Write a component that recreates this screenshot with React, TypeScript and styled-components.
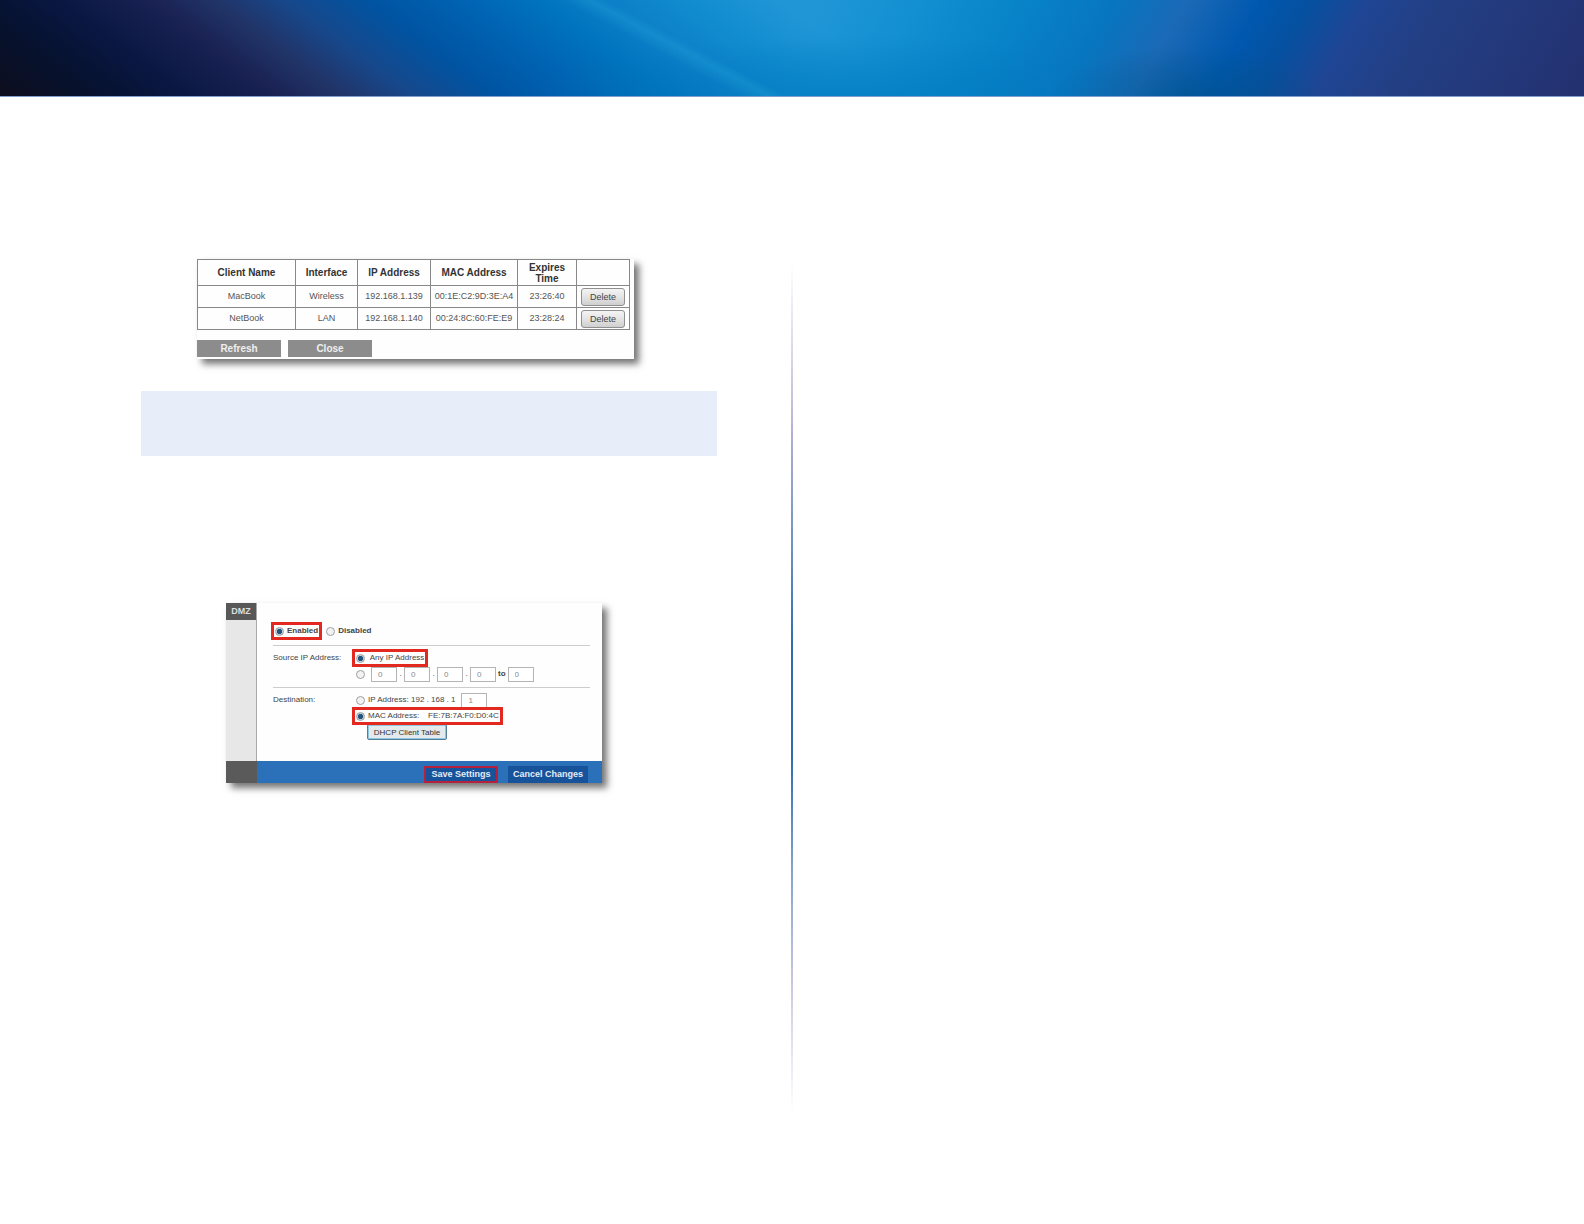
import React from "react";
import styled, { createGlobalStyle, css } from "styled-components";

const GlobalStyle = createGlobalStyle`
  *, *::before, *::after { box-sizing: border-box; }
  body {
    margin: 0;
    background: #fff;
    color: #444;
    font-family: "Liberation Sans", Arial, Helvetica, sans-serif;
  }
  button, input { font-family: inherit; }
`;

const Banner = styled.header`
  height: 97px;
  border-bottom: 1px solid #7f9dcb;
  background:
    linear-gradient(28deg, transparent 42%, rgba(40, 170, 220, 0.28) 43.6%, transparent 44.6%),
    radial-gradient(ellipse 330px 60px at 54% 100%, rgba(0, 120, 190, 0.6), transparent),
    radial-gradient(ellipse 140px 50px at 75% 100%, rgba(0, 80, 130, 0.5), transparent),
    linear-gradient(120deg,
      rgba(24, 146, 213, 0) 50%, #1290d2 56%, #0884c9 62%, #0776c0 68%,
      #1b69b6 72.5%, #0058ae 77%, #0650a0 80%, #1f4594 83.5%,
      #233f84 88%, #23387a 94%, #24306f 100%),
    linear-gradient(37deg,
      #0e0e1e 0%, #06122f 6%, #0a1743 11%, #1a2354 16.5%, #213468 20%,
      #17478a 24%, #0054a2 29%, #0062b2 34%, #0074be 39%, #0c80c8 43%,
      #128dd0 48%, #2196d6 53%, #2196d6 100%);
`;

const Page = styled.main`
  display: grid;
  grid-template-columns: 1fr 2px 1fr;
  min-height: 1120px;
`;

const Column = styled.section`
  display: flex;
  flex-direction: column;
  align-items: flex-start;
  padding: 162px 74px 0 141px;
`;

const Divider = styled.div`
  margin: 166px 0 16px;
  height: 850px;
  background: linear-gradient(#fff, #c9c6de 15%, #a9a9d0 22%, #6d93c2 33%, #2f6cae 45%,
    #2f6cae 58%, #86a5cc 72%, #c6c4df 84%, #fff);
`;

const Figure = styled.figure<{ $indent: number; $width: number }>`
  margin: 0 0 0 ${(p) => p.$indent}px;
  width: ${(p) => p.$width}px;
  background: #fefefe;
  box-shadow: 5px 5px 7px rgba(0, 0, 0, 0.55);
`;

const Note = styled.aside`
  align-self: stretch;
  height: 65px;
  margin: 32px 0 147px;
  background: #e8edfa;
`;

const ClientTable = styled.table`
  border-collapse: collapse;
  table-layout: fixed;
  width: 432px;
  font-size: 9px;
  line-height: 11px;
  color: #555;
  text-align: center;
`;

const Cell = css`
  border: 1px solid #888;
  padding: 0;
`;

const HeadCell = styled.th<{ $width: number }>`
  ${Cell}
  width: ${(p) => p.$width}px;
  height: 26px;
  font-size: 10px;
  color: #333;
`;

const DataCell = styled.td`
  ${Cell}
  height: 22px;
`;

const DeleteButton = styled.button`
  display: block;
  width: 44px;
  height: 18px;
  margin: 0 auto;
  padding: 0;
  border: 1px solid #909090;
  border-radius: 3px;
  background: linear-gradient(#f4f4f4, #e4e4e4 50%, #cfcfcf);
  color: #444;
  font-size: 9px;
`;

const TableActions = styled.div`
  display: flex;
  gap: 7px;
  padding: 10px 0 2px;
`;

const GreyButton = styled.button`
  width: 84px;
  height: 17px;
  padding: 0;
  border: 0;
  background: #8c8c8c;
  color: #eee;
  font-size: 10px;
  font-weight: bold;
`;

const Panel = styled.form`
  display: grid;
  grid-template-columns: 31px 1fr;
  grid-template-rows: 158px 22px;
  font-size: 8px;
  line-height: 10px;
`;

const Sidebar = styled.div`
  border-right: 1px solid #aaa;
  background: #e7e7e7;
`;

const Tab = styled.h2`
  margin: 0;
  height: 17px;
  background: #585858;
  color: #ddd;
  font-size: 9px;
  line-height: 16px;
  text-align: center;
`;

const Settings = styled.div`
  padding: 19px 12px 0 14px;
`;

const Section = styled.div`
  display: grid;
  grid-template-columns: 79px 1fr;
  margin: 0 0 0 2px;
  padding: 4px 0 5px;
  border-top: 1px solid #ccc;
`;

const SectionLabel = styled.span`
  padding-top: 3px;
`;

const Status = styled.div`
  display: flex;
  align-items: center;
  height: 23px;
  padding-bottom: 5px;
  font-weight: bold;
`;

const Line = styled.div`
  display: flex;
  align-items: center;
  gap: 2px;
  height: 16px;
  white-space: pre;
`;

const Choice = styled.label<{ $marked?: boolean }>`
  display: inline-flex;
  align-items: center;
  gap: 3px;
  height: ${(p) => (p.$marked ? 18 : 16)}px;
  padding: 0 ${(p) => (p.$marked ? 1 : 4)}px;
  border: ${(p) => (p.$marked ? "3px solid #e3281f" : "0 solid transparent")};
  white-space: pre;
`;

const Radio = styled.input.attrs({ type: "radio" })`
  appearance: none;
  flex: none;
  width: 9px;
  height: 9px;
  margin: 0;
  border: 1px solid #a0a0a0;
  border-radius: 50%;
  background: #f2f2f2;
  &:checked {
    background: radial-gradient(circle, #26547c 45%, #c3d2df 60%);
  }
`;

const Octet = styled.input`
  width: 26px;
  height: 15px;
  padding: 0 6px;
  border: 1px solid #b4b4b4;
  background: #fff;
  color: #888;
  font-size: 8px;
`;

const Separator = styled.span`
  width: 3px;
  text-align: center;
`;

const LookupButton = styled.button`
  display: block;
  width: 80px;
  height: 16px;
  margin-left: 15px;
  padding: 0;
  border: 1px solid #527f96;
  border-radius: 2px;
  background: #e3e9ec;
  box-shadow: inset 0 0 0 1px #8fc8e3;
  color: #333;
  font-size: 8px;
`;

const FooterStub = styled.div`
  background: #5a5a5a;
`;

const Footer = styled.footer`
  display: flex;
  justify-content: flex-end;
  align-items: flex-end;
  gap: 10px;
  padding-right: 14px;
  background: #2a71b9;
`;

const FooterButton = styled.button<{ $marked?: boolean }>`
  width: ${(p) => (p.$marked ? 74 : 80)}px;
  height: 17px;
  padding: 0;
  border: ${(p) => (p.$marked ? "2px solid #b5213c" : "0")};
  background: #17539b;
  color: #e3ecf7;
  font-size: 9px;
  line-height: 13px;
  font-weight: bold;
  white-space: nowrap;
`;

const clients = [
  { name: "MacBook", iface: "Wireless", ip: "192.168.1.139", mac: "00:1E:C2:9D:3E:A4", expires: "23:26:40" },
  { name: "NetBook", iface: "LAN", ip: "192.168.1.140", mac: "00:24:8C:60:FE:E9", expires: "23:28:24" },
];

const columns = [
  { title: "Client Name", width: 98 },
  { title: "Interface", width: 62 },
  { title: "IP Address", width: 73 },
  { title: "MAC Address", width: 87 },
  { title: "Expires Time", width: 59 },
  { title: "", width: 53 },
];

function ClientList() {
  return (
    <Figure $indent={56} $width={437}>
      <ClientTable>
        <thead>
          <tr>
            {columns.map((c) => (
              <HeadCell key={c.title} $width={c.width} scope="col">{c.title}</HeadCell>
            ))}
          </tr>
        </thead>
        <tbody>
          {clients.map((c) => (
            <tr key={c.name}>
              <DataCell>{c.name}</DataCell>
              <DataCell>{c.iface}</DataCell>
              <DataCell>{c.ip}</DataCell>
              <DataCell>{c.mac}</DataCell>
              <DataCell>{c.expires}</DataCell>
              <DataCell><DeleteButton type="button">Delete</DeleteButton></DataCell>
            </tr>
          ))}
        </tbody>
      </ClientTable>
      <TableActions>
        <GreyButton type="button">Refresh</GreyButton>
        <GreyButton type="button">Close</GreyButton>
      </TableActions>
    </Figure>
  );
}

function DmzSettings() {
  return (
    <Figure $indent={85} $width={376}>
      <Panel onSubmit={(e) => e.preventDefault()}>
        <Sidebar><Tab>DMZ</Tab></Sidebar>
        <Settings>
          <Status>
            <Choice $marked><Radio name="dmz" defaultChecked />Enabled</Choice>
            <Choice><Radio name="dmz" />Disabled</Choice>
          </Status>
          <Section>
            <SectionLabel>Source IP Address:</SectionLabel>
            <div>
              <Line>
                <Choice $marked><Radio name="source" defaultChecked />{" Any IP Address"}</Choice>
              </Line>
              <Line>
                <Choice><Radio name="source" aria-label="Address range" /></Choice>
                <Octet aria-label="First octet" defaultValue="0" />
                <Separator>.</Separator>
                <Octet aria-label="Second octet" defaultValue="0" />
                <Separator>.</Separator>
                <Octet aria-label="Third octet" defaultValue="0" />
                <Separator>.</Separator>
                <Octet aria-label="Range start" defaultValue="0" />
                <b>to</b>
                <Octet aria-label="Range end" defaultValue="0" />
              </Line>
            </div>
          </Section>
          <Section>
            <SectionLabel>Destination:</SectionLabel>
            <div>
              <Line>
                <Choice><Radio name="destination" />{"IP Address: 192 . 168 . 1"}</Choice>
                <Octet aria-label="Host number" defaultValue="1" />
              </Line>
              <Line>
                <Choice $marked><Radio name="destination" defaultChecked />{"MAC Address:    FE:7B:7A:F0:D0:4C"}</Choice>
              </Line>
              <LookupButton type="button">DHCP Client Table</LookupButton>
            </div>
          </Section>
        </Settings>
        <FooterStub />
        <Footer>
          <FooterButton type="submit" $marked>Save Settings</FooterButton>
          <FooterButton type="button">Cancel Changes</FooterButton>
        </Footer>
      </Panel>
    </Figure>
  );
}

export default function App() {
  return (
    <>
      <GlobalStyle />
      <Banner />
      <Page>
        <Column>
          <ClientList />
          <Note />
          <DmzSettings />
        </Column>
        <Divider />
        <Column />
      </Page>
    </>
  );
}
